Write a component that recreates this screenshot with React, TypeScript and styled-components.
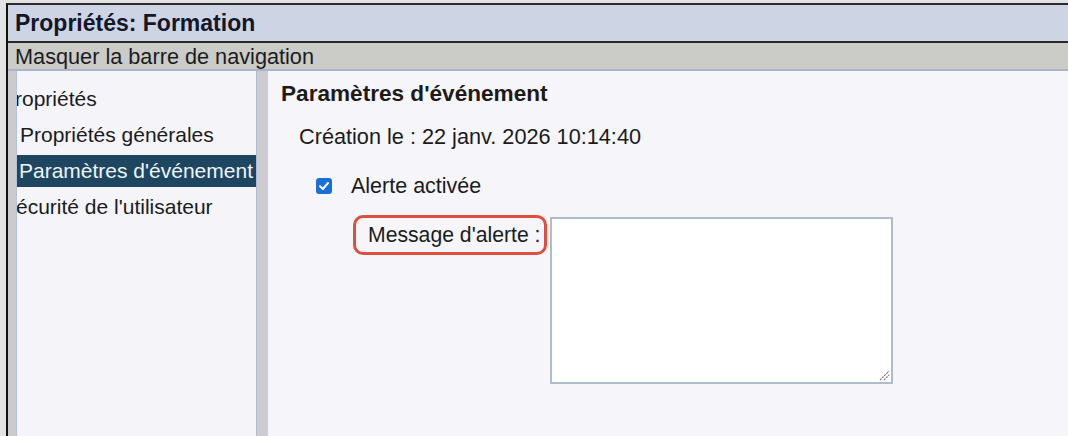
import React from "react";
import styled, { createGlobalStyle } from "styled-components";

const Global = createGlobalStyle`
  html, body { margin: 0; padding: 0; background: #e3e3e3; }
  body { font-family: "Liberation Sans", Arial, sans-serif; color: #1b1b22; }
  #root { width: 1068px; height: 436px; overflow: hidden; }
`;

const Screen = styled.div`
  width: 1068px;
  height: 436px;
  background: #e3e3e3;
  padding: 3px 0 0 6px;
  box-sizing: border-box;
  display: flex;
`;

const Window = styled.div`
  flex: 1;
  display: flex;
  flex-direction: column;
  border-left: 2px solid #111;
  border-top: 2px solid #2b2b2e;
  background: #f5f5fa;
  min-width: 0;
`;

const TitleBar = styled.div`
  height: 36px;
  background: #cdd5e5;
  border-bottom: 2px solid #26272b;
  display: flex;
  align-items: center;
  padding-left: 7px;
  font-weight: bold;
  font-size: 23px;
  color: #16162a;
`;

const NavBar = styled.div`
  background: #cbcbc7;
  border-bottom: 2px solid #a9b5c6;
  display: flex;
  align-items: center;
  padding: 2px 0 0 7px;
  box-sizing: border-box;
  height: 28px;
  font-size: 21.7px;
  color: #1b1b22;
`;

const Body = styled.div`
  flex: 1;
  display: flex;
`;

const Gutter = styled.div`
  width: 8px;
  background: #cbcbcf;
`;

const LeftPanel = styled.div`
  width: 239px;
  background: #f4f4f9;
  border-left: 1px solid #b4c2d6;
  padding-top: 10px;
  display: flex;
  flex-direction: column;
  overflow: hidden;
`;

const NavItem = styled.div<{ $indent: number; $selected?: boolean }>`
  height: ${(p) => (p.$selected ? 32 : 36)}px;
  margin: ${(p) => (p.$selected ? "2px 0" : "0")};
  display: flex;
  align-items: center;
  padding-left: ${(p) => p.$indent}px;
  font-size: 21px;
  white-space: nowrap;
  background: ${(p) => (p.$selected ? "#1e4660" : "transparent")};
  color: ${(p) => (p.$selected ? "#eef6fa" : "#1b1b22")};
`;

const Clip = styled.span<{ $shift: number }>`
  margin-left: ${(p) => -p.$shift}px;
`;

const Splitter = styled.div`
  width: 11px;
  background: #cdcdd1;
  border-left: 1px solid #b0bdd0;
`;

const RightPanel = styled.div`
  flex: 1;
  background: #f5f5fa;
  padding: 10px 0 0 13px;
  display: flex;
  flex-direction: column;
`;

const Heading = styled.div`
  font-weight: bold;
  font-size: 22.6px;
  color: #1e1a1a;
  height: 26px;
  line-height: 26px;
`;

const Created = styled.div`
  font-size: 21.7px;
  margin: 17px 0 0 18px;
  height: 26px;
  line-height: 26px;
`;

const CheckRow = styled.label`
  display: flex;
  align-items: center;
  gap: 19px;
  margin: 23px 0 0 35px;
  font-size: 21.5px;
  height: 26px;
`;

const Box = styled.span`
  width: 16px;
  height: 16px;
  border-radius: 3px;
  background: #1a6fd4;
  display: flex;
  align-items: center;
  justify-content: center;
`;

const MessageRow = styled.div`
  display: flex;
  align-items: flex-start;
  gap: 3px;
  margin: 16px 0 0 72px;
`;

const Highlight = styled.div`
  border: 3px solid #de4f3d;
  border-radius: 10px;
  height: 34px;
  width: 188px;
  display: flex;
  align-items: center;
  font-size: 21.2px;
`;

const LabelText = styled.span`
  margin-left: 12px;
  white-space: nowrap;
`;

const TextArea = styled.div`
  position: relative;
  width: 339px;
  height: 163px;
  margin-top: 2px;
  background: #fff;
  border: 2px solid #aebdcc;
`;

const Grip = styled.svg`
  position: absolute;
  right: 1px;
  bottom: 1px;
`;

export default function App() {
  return (
    <>
      <Global />
      <Screen>
        <Window>
          <TitleBar>Propriétés: Formation</TitleBar>
          <NavBar>Masquer la barre de navigation</NavBar>
          <Body>
            <Gutter />
            <LeftPanel>
              <NavItem $indent={0}>
                <Clip $shift={16}>Propriétés</Clip>
              </NavItem>
              <NavItem $indent={3}>Propriétés générales</NavItem>
              <NavItem $indent={2} $selected>
                Paramètres d'événement
              </NavItem>
              <NavItem $indent={0}>
                <Clip $shift={15}>Sécurité de l'utilisateur</Clip>
              </NavItem>
            </LeftPanel>
            <Splitter />
            <RightPanel>
              <Heading>Paramètres d'événement</Heading>
              <Created>Création le : 22 janv. 2026 10:14:40</Created>
              <CheckRow>
                <Box>
                  <svg width="12" height="12" viewBox="0 0 12 12">
                    <path d="M2 6.3 L4.8 9 L10 3" fill="none" stroke="#fff" strokeWidth="2" strokeLinecap="round" strokeLinejoin="round" />
                  </svg>
                </Box>
                Alerte activée
              </CheckRow>
              <MessageRow>
                <Highlight>
                  <LabelText>Message d'alerte :</LabelText>
                </Highlight>
                <TextArea>
                  <Grip width="12" height="12" viewBox="0 0 12 12">
                    <path d="M2 11 L11 2 M6 11 L11 6" stroke="#777" strokeWidth="1.2" strokeDasharray="2 1" />
                  </Grip>
                </TextArea>
              </MessageRow>
            </RightPanel>
          </Body>
        </Window>
      </Screen>
    </>
  );
}
